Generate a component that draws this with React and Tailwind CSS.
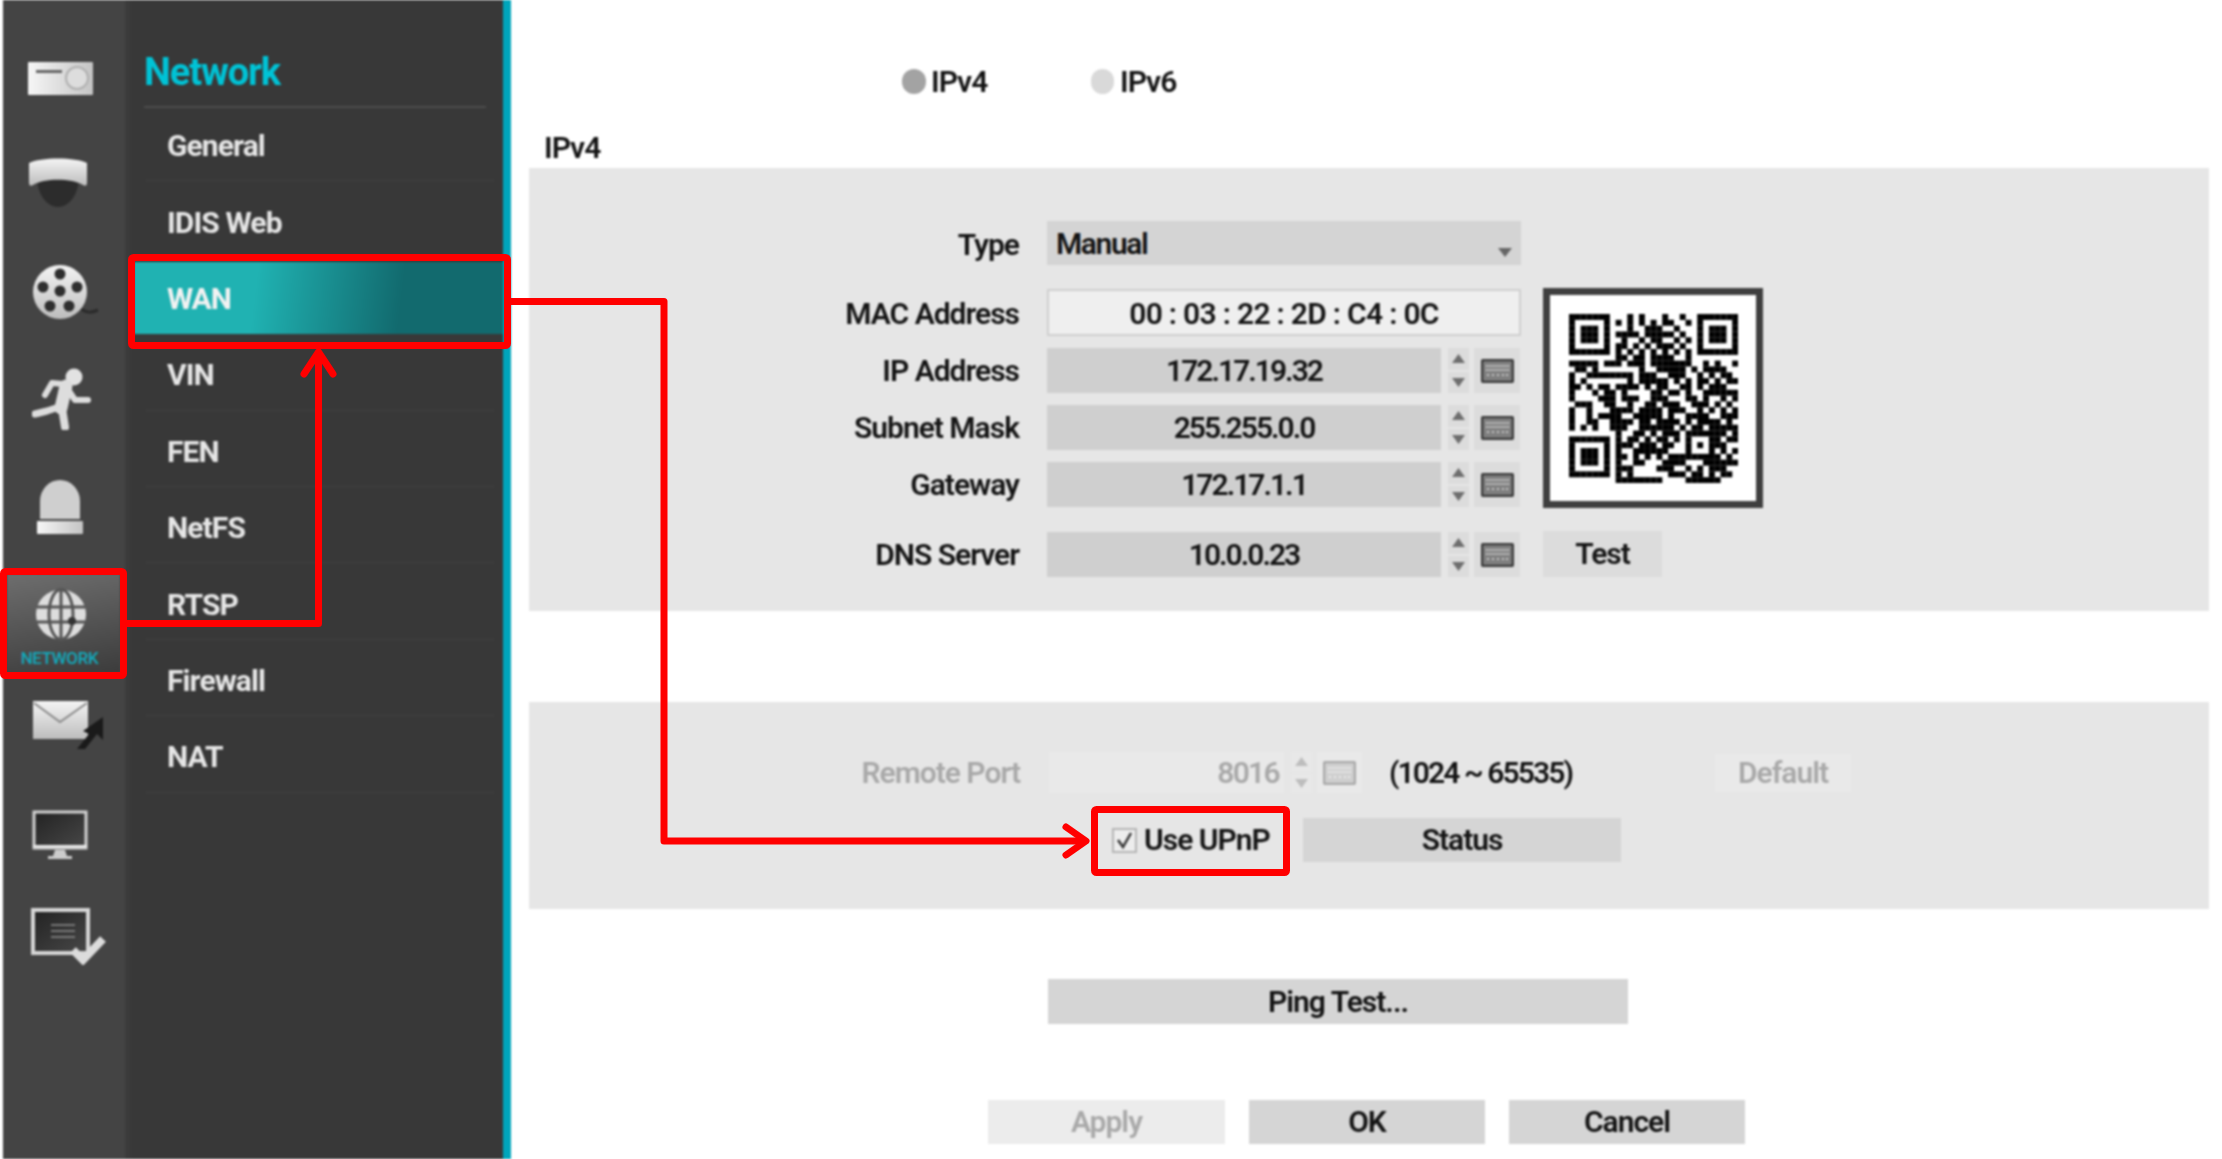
const MENU = ["General", "IDIS Web", "WAN", "VIN", "FEN", "NetFS", "RTSP", "Firewall", "NAT"];

// rough copy of the code in the picture, row by row
const QR = [
  "11111110001010001001001111111",
  "10000010101010101100101000001",
  "10111010001001110010001011101",
  "10111010111101111101001011101",
  "10111010010010110010101011101",
  "10000010110101011101001000001",
  "11111110101010101010101111111",
  "00000000110110111100100000000",
  "11111011101110111111100101001",
  "01101000000010011111010111100",
  "10011111111011100111001010110",
  "10100000001011111010101101011",
  "11010110111101011001101011100",
  "10001011010000110110100111111",
  "10000111011100111000110100101",
  "01110011001001101110011101010",
  "10010001111011110111001010101",
  "10010111100111110100111100111",
  "10011001111011011110101111010",
  "10101001110011111101011011111",
  "00000000100110101110111111101",
  "11111110101101011010100011011",
  "10000010111011101100101011100",
  "10111010100111111000100010101",
  "10111010110101010111111111010",
  "10111010100110001111000111111",
  "10000010111000011100101011100",
  "11111110101000000111011010110",
  "00000000111111110000111111000",
];

function QrBox() {
  return (
    <div className="flex h-[220px] w-[220px] items-center justify-center border-[7px] border-[#3f3f3f] bg-white">
      <svg width="169" height="169" viewBox="0 0 29 29">
        {QR.map((row, y) =>
          row.split("").map((c, x) => (c === "1" ? <rect key={x + "-" + y} x={x} y={y} width="1.02" height="1.02" fill="#000" /> : null))
        )}
      </svg>
    </div>
  );
}

function Keyboard({ faded }) {
  const c = faded ? "#aaaaaa" : "#3c3c3c";
  return (
    <svg width="33" height="24" viewBox="0 0 33 24">
      <rect x="1" y="1" width="31" height="22" rx="2" fill={faded ? "#cfcfcf" : "#7f7f7f"} stroke={c} strokeWidth="2.5" />
      <path d="M5 7h23M5 11h23M7 15v3M12 15v3M17 15v3M22 15v3M26 15v3" stroke={faded ? "#f4f4f4" : "#e0e0e0"} strokeWidth="1.5" strokeDasharray="2 1" fill="none" />
    </svg>
  );
}

function Spinner({ faded }) {
  const c = faded ? "#bdbdbd" : "#6e6e6e";
  const bg = faded ? "bg-[#e8e8e8]" : "bg-[#dcdcdc]";
  return (
    <div className="ml-[7px] flex w-[21px] flex-col gap-[2px] self-stretch">
      <div className={`flex flex-1 items-center justify-center ${bg}`}>
        <svg width="13" height="9" viewBox="0 0 13 9"><path d="M6.5 0L13 9H0z" fill={c} /></svg>
      </div>
      <div className={`flex flex-1 items-center justify-center ${bg}`}>
        <svg width="13" height="9" viewBox="0 0 13 9"><path d="M6.5 9L13 0H0z" fill={c} /></svg>
      </div>
    </div>
  );
}

function IpRow({ label, value, className }) {
  return (
    <div className={`flex h-[45px] items-center ${className}`}>
      <div className="w-[490px] text-right">{label}</div>
      <div className="ml-[28px] flex h-full w-[474px]">
        <div className="flex h-full w-[394px] items-center justify-center bg-[#cfcfcf] tracking-[-2px]">{value}</div>
        <Spinner />
        <div className="ml-[5px] flex w-[46px] items-center justify-center bg-[#dcdcdc]">
          <Keyboard />
        </div>
      </div>
    </div>
  );
}

function Btn({ children, className }) {
  return <div className={`flex items-center justify-center ${className}`}>{children}</div>;
}

function Defs() {
  return (
    <svg className="absolute size-0">
      <defs>
        <linearGradient id="silver" x1="0" y1="0" x2="0" y2="1">
          <stop offset="0" stopColor="#f4f4f4" />
          <stop offset="1" stopColor="#bdbdbd" />
        </linearGradient>
        <linearGradient id="silverx" x1="0" y1="0" x2="1" y2="0">
          <stop offset="0" stopColor="#f6f6f6" />
          <stop offset="1" stopColor="#c4c4c4" />
        </linearGradient>
        <linearGradient id="dark" x1="0" y1="0" x2="1" y2="1">
          <stop offset="0" stopColor="#222222" />
          <stop offset="1" stopColor="#484848" />
        </linearGradient>
      </defs>
    </svg>
  );
}

function Rail() {
  return (
    <div className="flex h-full w-[122px] shrink-0 flex-col bg-[#444444]">
      {/* recorder */}
      <svg className="ml-[25px] mt-[62px]" width="65" height="33" viewBox="0 0 65 33">
        <rect width="65" height="33" rx="1" fill="url(#silverx)" />
        <rect x="8" y="8" width="26" height="3" fill="#666" />
        <circle cx="49" cy="16" r="11" fill="#dddddd" stroke="#b0b0b0" strokeWidth="2" />
      </svg>
      {/* dome camera */}
      <svg className="ml-[25px] mt-[62px]" width="60" height="50" viewBox="0 0 60 50">
        <path d="M9 20A21 30 0 0 0 51 20Z" fill="#2c2c2c" />
        <path d="M1 6C12 0 48 0 59 6v20q0 4-4 2C44 21 16 21 5 28q-4 2-4-2z" fill="url(#silver)" />
      </svg>
      {/* film reel */}
      <svg className="ml-[30px] mt-[58px]" width="66" height="55" viewBox="0 0 66 55">
        <path d="M48 44c6 4 10 4 17 1" stroke="#2a2a2a" strokeWidth="3" fill="none" />
        <circle cx="27" cy="27" r="27" fill="url(#silver)" />
        <g fill="#2e2e2e">
          <circle cx="27" cy="9" r="5.5" />
          <circle cx="10" cy="22" r="5.5" />
          <circle cx="44" cy="22" r="5.5" />
          <circle cx="17" cy="41" r="5.5" />
          <circle cx="36" cy="41" r="5.5" />
          <circle cx="27" cy="26" r="5.5" />
        </g>
      </svg>
      {/* running man */}
      <svg className="ml-[29px] mt-[48px]" width="60" height="62" viewBox="0 0 60 62">
        <circle cx="42" cy="9" r="8.5" fill="#e2e2e2" />
        <g fill="none" stroke="#dddddd" strokeLinecap="round" strokeLinejoin="round">
          <path d="M34 18L29 40" strokeWidth="13" />
          <path d="M31 16L20 15L13 27" strokeWidth="6" />
          <path d="M37 23L43 32L56 32" strokeWidth="6" />
          <path d="M27 39L15 43L3 46" strokeWidth="7" />
          <path d="M30 40L33 59" strokeWidth="8" />
        </g>
      </svg>
      {/* siren */}
      <svg className="ml-[34px] mt-[50px]" width="46" height="54" viewBox="0 0 46 54">
        <path d="M3 39V21a20 21 0 0 1 40 0v18z" fill="#cfcfcf" />
        <rect y="41" width="46" height="13" rx="1" fill="url(#silverx)" />
      </svg>
      {/* active item */}
      <div className="ml-[4px] mt-[40px] flex h-[98px] w-[113px] flex-col items-center bg-[linear-gradient(170deg,#6e6e6e,#3c3c3c)]">
        <svg className="mr-[6px] mt-[14px]" width="54" height="53" viewBox="0 0 54 53">
          <circle cx="27" cy="26.5" r="25" fill="#dddddd" />
          <g fill="none" stroke="#555" strokeWidth="3">
            <ellipse cx="27" cy="26.5" rx="12" ry="25" />
            <path d="M27 1v51M3 19h48M3 34h48" />
          </g>
          <circle cx="38" cy="33" r="4" fill="#333" />
        </svg>
        <div className="mr-[8px] mt-[9px] whitespace-nowrap text-[17px] leading-[16px] font-medium tracking-[-0.4px] text-[#12a8bb]">NETWORK</div>
      </div>
      {/* mail */}
      <svg className="ml-[30px] mt-[28px]" width="72" height="50" viewBox="0 0 72 50">
        <rect x="0" y="1" width="55" height="38" fill="url(#silver)" />
        <path d="M1 3L27 22L54 3" fill="none" stroke="#8a8a8a" strokeWidth="2" />
        <path d="M44 49L56 34L50 31L70 17L70 40L64 34L52 49z" fill="#1a1a1a" />
      </svg>
      {/* monitor */}
      <svg className="ml-[29px] mt-[60px]" width="56" height="50" viewBox="0 0 56 50">
        <rect x="2" y="2" width="52" height="36" fill="url(#dark)" stroke="#d2d2d2" strokeWidth="3" />
        <path d="M1 35h54v2H1z" fill="#ededed" />
        <path d="M23 40h10l2 6h5v3H16v-3h5z" fill="#cccccc" />
      </svg>
      {/* task list */}
      <svg className="ml-[28px] mt-[48px]" width="75" height="57" viewBox="0 0 75 57">
        <rect x="2" y="2" width="55" height="43" fill="url(#dark)" stroke="#d6d6d6" strokeWidth="4" />
        <path d="M20 17h24M20 23h24M20 29h24" stroke="#8e8e8e" strokeWidth="1.5" />
        <path d="M42 42l10 10 20-21" fill="none" stroke="#dcdcdc" strokeWidth="8" />
      </svg>
    </div>
  );
}

function Menu() {
  return (
    <div className="flex h-full w-[378px] shrink-0 flex-col bg-[#383838] bg-[linear-gradient(90deg,#3d3d3d,#383838_8px)] pl-[19px]">
      <div className="h-[108px] w-[342px] border-b-2 border-[#4c4c4c] pt-[50px] text-[38px] leading-[44px] font-bold tracking-[-1.1px] text-[#00c3d6]">
        Network
      </div>
      <div className="-mt-[3px] ml-[2px] w-[348px]">
        {MENU.map((name) =>
          name === "WAN" ? (
            <div key={name} className="-ml-[12px] -mr-[9px] mb-[0.4px] mt-[4px] flex h-[72px] items-center bg-[linear-gradient(97deg,#20b2b2_0%,#20b2b2_33%,#126a6e_72%,#126a6e_100%)] pl-[33px] pt-[2px] text-[30px] font-bold tracking-[-1px] text-[#f2f2f2]">
              {name}
            </div>
          ) : (
            <div key={name} className="flex h-[76.4px] items-center border-b border-[#424242] pl-[21px] pt-[6px] text-[30px] font-bold tracking-[-0.9px] text-[#e6e6e6]">
              {name}
            </div>
          )
        )}
      </div>
    </div>
  );
}

function Main() {
  return (
    <div className="flex-1 pl-[18px] pr-[13px] text-[30px] leading-none font-semibold tracking-[-1px] text-[#141414]">
      <div className="ml-[373px] mt-[69px] flex h-[25px] items-center">
        <div className="h-[25px] w-[24px] rounded-full bg-[#a3a3a3]" />
        <div className="ml-[5px] w-[160px]">IPv4</div>
        <div className="h-[25px] w-[23px] rounded-full bg-[#d9d9d9]" />
        <div className="ml-[6px]">IPv6</div>
      </div>
      <div className="ml-[15px] mt-[34px] flex h-[40px] items-center">IPv4</div>

      <div className="flex h-[443px] bg-[#e6e6e6] pt-[53px]">
        <div className="flex flex-col">
          <div className="flex h-[44px] items-center">
            <div className="w-[490px] pt-[3px] text-right">Type</div>
            <div className="relative ml-[28px] flex h-full w-[474px] items-center bg-[#d4d4d4] pl-[9px] pt-[2px] tracking-[-1.4px]">
              Manual
              <svg className="absolute bottom-[8px] right-[9px]" width="14" height="9" viewBox="0 0 14 9"><path d="M0 0h14L7 9z" fill="#666" /></svg>
            </div>
          </div>
          <div className="mt-[24px] flex h-[47px] items-center">
            <div className="w-[490px] pt-[2px] text-right">MAC Address</div>
            <div className="ml-[28px] flex h-full w-[474px] items-center justify-center border-2 border-[#cfcfcf] bg-[#efefef] pt-[2px] tracking-[-0.7px]">00 : 03 : 22 : 2D : C4 : 0C</div>
          </div>
          <IpRow label="IP Address" value="172.17.19.32" className="mt-[12px]" />
          <IpRow label="Subnet Mask" value="255.255.0.0" className="mt-[12px]" />
          <IpRow label="Gateway" value="172.17.1.1" className="mt-[12px]" />
          <IpRow label="DNS Server" value="10.0.0.23" className="mt-[25px]" />
        </div>
        <div className="ml-[22px] flex flex-col pt-[67px]">
          <QrBox />
          <Btn className="mt-[23px] h-[46px] w-[119px] bg-[#dcdcdc]">Test</Btn>
        </div>
      </div>

      <div className="mt-[91px] h-[207px] bg-[#e6e6e6] pt-[50px]">
        <div className="flex h-[41px] items-center text-[#a9a9a9]">
          <div className="w-[491px] text-right">Remote Port</div>
          <div className="ml-[29px] flex h-full w-[235px] items-center justify-end bg-[#e9e9e9] pr-[5px] tracking-[-1.7px]">8016</div>
          <Spinner faded />
          <div className="ml-[5px] flex h-full w-[45px] items-center justify-center bg-[#e9e9e9]">
            <Keyboard faded />
          </div>
          <div className="ml-[27px] w-[326px] tracking-[-1.9px] text-[#141414]">(1024 ~ 65535)</div>
          <Btn className="h-[38px] w-[136px] bg-[#e9e9e9]">Default</Btn>
        </div>
        <div className="ml-[583px] mt-[25px] flex h-[44px] items-center">
          <div className="flex h-[25px] w-[25px] items-center justify-center border-2 border-[#b5b5b5] bg-[#ededed]">
            <svg width="19" height="19" viewBox="0 0 19 19"><path d="M3 9l5 7 8-14" fill="none" stroke="#333" strokeWidth="2.5" /></svg>
          </div>
          <div className="ml-[7px] w-[159px]">Use UPnP</div>
          <Btn className="h-full w-[318px] bg-[#d5d5d5]">Status</Btn>
        </div>
      </div>

      <Btn className="ml-[519px] mt-[70px] h-[45px] w-[580px] bg-[#d5d5d5]">Ping Test...</Btn>

      <div className="ml-[459px] mt-[76px] flex h-[44px] gap-[24px]">
        <Btn className="w-[237px] bg-[#ececec] text-[#a9a9a9]">Apply</Btn>
        <Btn className="w-[236px] bg-[#d5d5d5]">OK</Btn>
        <Btn className="w-[236px] bg-[#d5d5d5]">Cancel</Btn>
      </div>
    </div>
  );
}

function Annotations() {
  return (
    <svg className="absolute left-0 top-0 blur-[0.3px]" width="2222" height="1159" viewBox="0 0 2222 1159" fill="none" stroke="#ff0000" strokeWidth="7">
      <rect x="3.5" y="571.5" width="120" height="104" rx="2" />
      <rect x="131.5" y="257.5" width="376" height="88" rx="2" />
      <rect x="1094.5" y="809.5" width="192" height="63" rx="2" />
      <path d="M127 623.5H318.5V352" strokeLinejoin="round" />
      <path d="M304 374L318.5 352L333 374" strokeLinecap="round" strokeLinejoin="round" />
      <path d="M511 301.5H664V841H1086" strokeLinejoin="round" />
      <path d="M1066 827L1086 841L1066 855" strokeLinecap="round" strokeLinejoin="round" />
    </svg>
  );
}

export default function App() {
  return (
    <div className="relative h-[1159px] w-[2222px] overflow-hidden bg-white font-['Roboto',sans-serif]">
      <Defs />
      <div className="flex h-full pl-[3px] blur-[0.9px]">
        <Rail />
        <Menu />
        <div className="h-full w-[8px] shrink-0 bg-[#00a5bb]" />
        <Main />
      </div>
      <Annotations />
    </div>
  );
}
